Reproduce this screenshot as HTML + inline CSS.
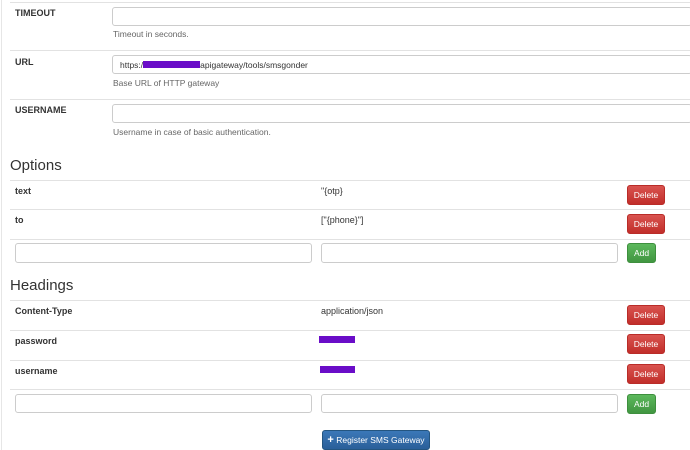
<!DOCTYPE html>
<html><head><style>
body{margin:0;width:690px;height:450px;background:#fff;position:relative;overflow:hidden;font-family:"Liberation Sans",Arial,sans-serif;font-size:9px;color:#333}
.a{position:absolute}
.ln{position:absolute;left:10px;right:0;height:1px;background:#e2e2e2}
.lb{position:absolute;left:15px;font-weight:bold;font-size:9px}
.in{position:absolute;border:1px solid #ccc;border-radius:3px;background:#fff;box-sizing:border-box}
.hp{position:absolute;left:113px;color:#666;font-size:8.5px}
.btn{position:absolute;border-radius:3px;color:#fff;font-size:8.5px;text-align:center;box-sizing:border-box}
.del{background:linear-gradient(#d9534f,#c12e2a);border:1px solid #b92c28;width:38px;height:20px;line-height:18px;left:627px}
.add{background:linear-gradient(#5cb85c,#419641);border:1px solid #3e8f3e;width:29px;height:20px;line-height:18px;left:627px}
h2{position:absolute;left:10px;margin:0;font-weight:normal;font-size:15px;color:#333}
.red{display:inline-block;background:#6a0dc8;height:7px;vertical-align:middle}
</style></head><body>
<div class="a" style="left:1px;top:0;width:1px;height:450px;background:#e6e6e6"></div>
<div class="ln" style="top:2px"></div>
<div class="lb" style="top:8px">TIMEOUT</div>
<div class="in" style="left:112px;top:7px;width:580px;height:19px"></div>
<div class="hp" style="top:29px">Timeout in seconds.</div>
<div class="ln" style="top:50px"></div>
<div class="lb" style="top:57px">URL</div>
<div class="in" style="left:112px;top:55px;width:580px;height:19px;padding:4px 0 0 7px;font-size:8.5px">https:/<span class="red" style="width:57px;margin-top:-2px"></span>apigateway/tools/smsgonder</div>
<div class="hp" style="top:78px">Base URL of HTTP gateway</div>
<div class="ln" style="top:99px"></div>
<div class="lb" style="top:105px">USERNAME</div>
<div class="in" style="left:112px;top:104px;width:580px;height:19px"></div>
<div class="hp" style="top:127px">Username in case of basic authentication.</div>
<h2 style="top:157px">Options</h2>
<div class="ln" style="top:180px"></div>
<div class="lb" style="top:186px">text</div><div class="a" style="left:321px;top:186px">"{otp}</div>
<div class="btn del" style="top:185px">Delete</div>
<div class="ln" style="top:209px"></div>
<div class="lb" style="top:215px">to</div><div class="a" style="left:321px;top:215px">["{phone}"]</div>
<div class="btn del" style="top:214px">Delete</div>
<div class="ln" style="top:239px"></div>
<div class="in" style="left:15px;top:243px;width:297px;height:20px"></div>
<div class="in" style="left:321px;top:243px;width:297px;height:20px"></div>
<div class="btn add" style="top:243px">Add</div>
<h2 style="top:277px">Headings</h2>
<div class="ln" style="top:300px"></div>
<div class="lb" style="top:306px">Content-Type</div><div class="a" style="left:321px;top:306px">application/json</div>
<div class="btn del" style="top:305px">Delete</div>
<div class="ln" style="top:330px"></div>
<div class="lb" style="top:336px">password</div><div class="a red" style="left:319px;top:336px;width:36px"></div>
<div class="btn del" style="top:334px">Delete</div>
<div class="ln" style="top:360px"></div>
<div class="lb" style="top:366px">username</div><div class="a red" style="left:320px;top:366px;width:35px"></div>
<div class="btn del" style="top:364px">Delete</div>
<div class="ln" style="top:389px"></div>
<div class="in" style="left:15px;top:394px;width:297px;height:19px"></div>
<div class="in" style="left:321px;top:394px;width:297px;height:19px"></div>
<div class="btn add" style="top:394px">Add</div>
<div class="btn" style="left:322px;top:430px;width:108px;height:20px;line-height:19px;background:linear-gradient(#3b78b8,#2a5f99);border:1px solid #245580"><b style="font-size:11px">+</b> Register SMS Gateway</div>
</body></html>
